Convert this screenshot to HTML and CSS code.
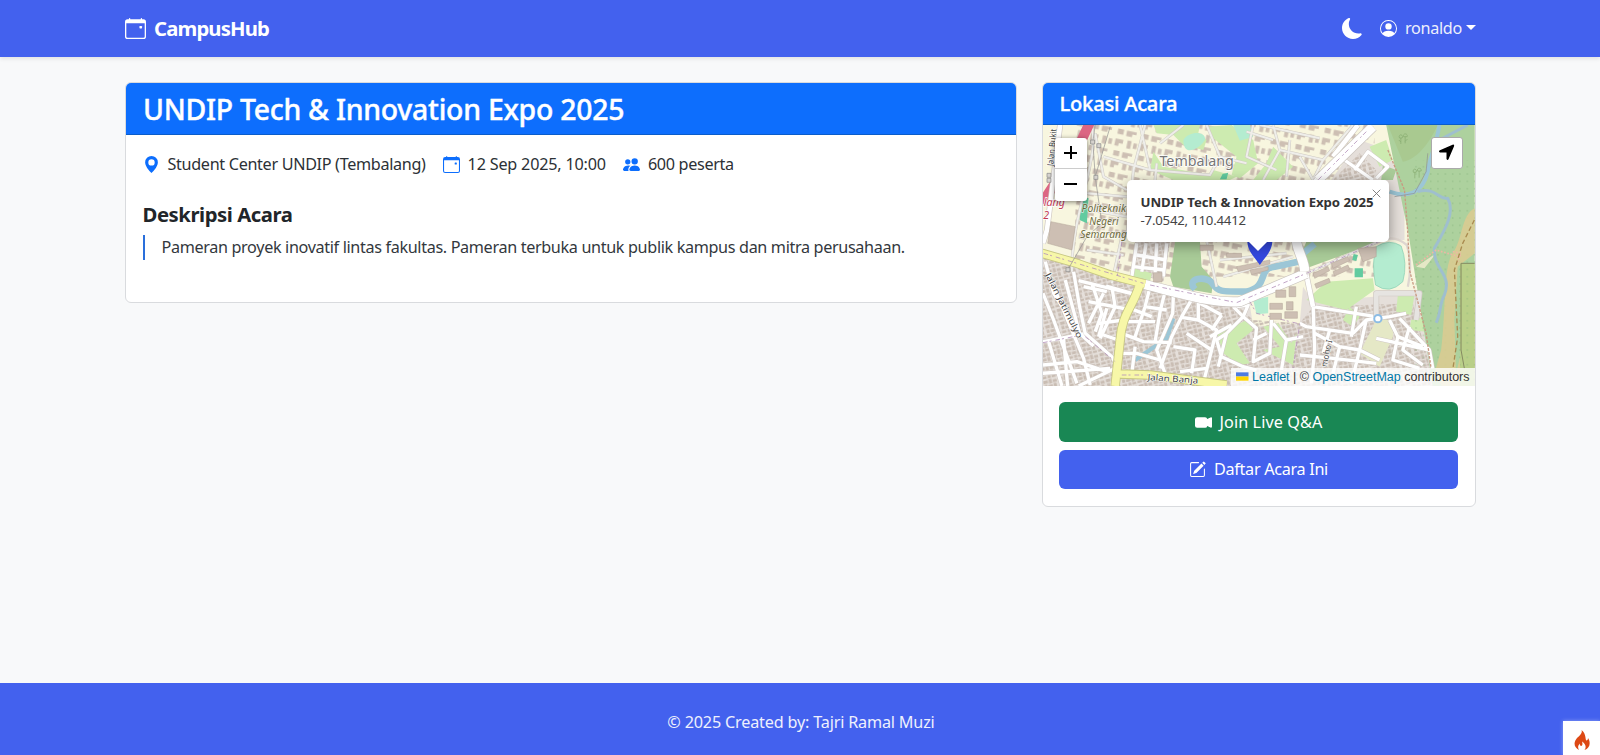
FILE: index.html
```html
<!DOCTYPE html>
<html lang="id">
<head>
<meta charset="utf-8">
<title>CampusHub</title>
<link rel="stylesheet" href="styles.css">
</head>
<body>
<nav class="navbar">
  <div class="container navbar-inner">
    <div class="brand">
      <svg class="icon brand-icon" viewBox="0 0 16 16"><path d="M11 6.5a.5.5 0 0 1 .5-.5h1a.5.5 0 0 1 .5.5v1a.5.5 0 0 1-.5.5h-1a.5.5 0 0 1-.5-.5z"/><path d="M3.5 0a.5.5 0 0 1 .5.5V1h8V.5a.5.5 0 0 1 1 0V1h1a2 2 0 0 1 2 2v11a2 2 0 0 1-2 2H2a2 2 0 0 1-2-2V3a2 2 0 0 1 2-2h1V.5a.5.5 0 0 1 .5-.5M1 4v10a1 1 0 0 0 1 1h12a1 1 0 0 0 1-1V4z"/></svg>
      <span class="brand-name">CampusHub</span>
    </div>
    <div class="nav-tools">
      <svg class="icon moon-icon" viewBox="0 0 16 16"><path d="M6 .278a.77.77 0 0 1 .08.858 7.2 7.2 0 0 0-.878 3.46c0 4.021 3.278 7.277 7.318 7.277q.792-.001 1.533-.16a.79.79 0 0 1 .81.316.73.73 0 0 1-.031.893A8.35 8.35 0 0 1 8.344 16C3.734 16 0 12.286 0 7.71 0 4.266 2.114 1.312 5.124.06A.75.75 0 0 1 6 .278"/></svg>
      <svg class="icon user-icon" viewBox="0 0 16 16"><path d="M11 6a3 3 0 1 1-6 0 3 3 0 0 1 6 0"/><path fill-rule="evenodd" d="M0 8a8 8 0 1 1 16 0A8 8 0 0 1 0 8m8-7a7 7 0 0 0-5.468 11.37C3.242 11.226 4.805 10 8 10s4.757 1.225 5.468 2.37A7 7 0 0 0 8 1"/></svg>
      <span class="user-name">ronaldo</span>
      <span class="caret"></span>
    </div>
  </div>
</nav>

<main class="container content">
  <section class="card">
    <h1 class="card-header event-title"><span>UNDIP Tech &amp; Innovation Expo 2025</span></h1>
    <div class="event-body">
      <div class="meta">
        <svg class="icon meta-icon" viewBox="0 0 16 16"><path d="M8 16s6-5.686 6-10A6 6 0 0 0 2 6c0 4.314 6 10 6 10m0-7a3 3 0 1 1 0-6 3 3 0 0 1 0 6"/></svg>
        <span class="meta-text place">Student Center UNDIP (Tembalang)</span>
        <svg class="icon meta-icon" viewBox="0 0 16 16"><path d="M11 6.5a.5.5 0 0 1 .5-.5h1a.5.5 0 0 1 .5.5v1a.5.5 0 0 1-.5.5h-1a.5.5 0 0 1-.5-.5z"/><path d="M3.5 0a.5.5 0 0 1 .5.5V1h8V.5a.5.5 0 0 1 1 0V1h1a2 2 0 0 1 2 2v11a2 2 0 0 1-2 2H2a2 2 0 0 1-2-2V3a2 2 0 0 1 2-2h1V.5a.5.5 0 0 1 .5-.5M1 4v10a1 1 0 0 0 1 1h12a1 1 0 0 0 1-1V4z"/></svg>
        <span class="meta-text date">12 Sep 2025, 10:00</span>
        <svg class="icon meta-icon" viewBox="0 0 16 16"><path d="M7 14s-1 0-1-1 1-4 5-4 5 3 5 4-1 1-1 1zm4-6a3 3 0 1 0 0-6 3 3 0 0 0 0 6m-5.784 6A2.24 2.24 0 0 1 5 13c0-1.355.68-2.75 1.936-3.72A6.3 6.3 0 0 0 5 9c-4 0-5 3-5 4s1 1 1 1zM4.5 8a2.5 2.5 0 1 0 0-5 2.5 2.5 0 0 0 0 5"/></svg>
        <span class="meta-text">600 peserta</span>
      </div>
      <h2 class="section-title">Deskripsi Acara</h2>
      <p class="description">Pameran proyek inovatif lintas fakultas. Pameran terbuka untuk publik kampus dan mitra perusahaan.</p>
    </div>
  </section>

  <aside class="card">
    <h2 class="card-header location-title">Lokasi Acara</h2>
    <div class="map">
      <svg class="map-canvas" viewBox="8 15 1299 783" preserveAspectRatio="none">
        <defs>
          <pattern id="houses" width="46" height="40" patternUnits="userSpaceOnUse" patternTransform="rotate(-14)">
            <path class="house" d="M2 3h14v9H2zM19 1h9v13h-9zM31 4h12v9H31zM3 16h9v10H3zM15 18h13v8H15zM31 16h9v12h-9zM1 30h14v7H1zM19 29h9v9h-9zM31 31h12v7H31z"/>
          </pattern>
          <pattern id="campus" width="76" height="66" patternUnits="userSpaceOnUse" patternTransform="rotate(12)">
            <path class="building" d="M5 7h24v12H17v9H5zM42 5h12v24H42zM61 10h11v16H61zM7 42h18v16H7zM34 43h30v8H52v8H34z"/>
          </pattern>
          <pattern id="trees" width="22" height="22" patternUnits="userSpaceOnUse">
            <circle class="tree" cx="8" cy="8" r="1.6"/>
          </pattern>
          <g id="lanes">
            <path d="M100 455L118 560L135 640L215 710L235 745"/>
            <path d="M15 425L40 520L118 640L160 678"/>
            <path d="M8 520L40 600L110 790M40 500L130 715L150 795M75 480L118 640M8 735L110 725L200 755M8 665L130 642M25 665L65 798M70 658L82 798M5 760L210 745M115 798L225 745"/>
            <path d="M115 482L290 525M155 490L185 580L165 635M198 498L275 520M200 565L175 650M180 655L225 560L215 500M145 545L275 570M175 610L250 600M190 645L235 660M130 500L200 515M145 610L190 520"/>
            <path d="M270 565L335 590M255 605L345 605M245 640L310 665L395 668M240 700L290 700L360 720M285 650L315 560L380 570M330 500L315 560M375 515L360 575L345 665M400 525L398 580L350 690L375 760"/>
            <path d="M460 530L425 590L395 650L360 745M425 592L475 600L530 630L515 690L490 790M475 600L475 545M440 640L515 690M400 680L465 690L455 760M285 680L275 760M420 755L500 745"/>
            <path d="M580 560L610 590L560 640L535 740M610 590L650 625L640 725L690 700L695 600M560 640L530 660L545 710L610 740L650 750M510 650L575 615M610 590L625 555L590 560M480 550L545 585M545 585L515 630"/>
            <path d="M700 610L740 660L725 750M740 660L790 650M640 660L680 640M780 610L800 620L940 640L980 600L1050 590L1100 580M820 550L825 690L815 790M820 560L1010 590"/>
            <path d="M825 640L900 680L880 760M870 630L850 700M900 680L960 690L935 790M950 560L935 650M980 600L960 690L1020 720M780 705L880 715L1010 730M1010 655L1170 690M1050 600L1075 650L1150 680M1075 650L1060 720L1140 745M1110 620L1090 690L1150 735M1080 595L1170 690L1180 745"/>
            <path d="M290 370L275 470M318 370L305 455M350 370L345 460M380 370L370 470M290 405L380 420M280 440L375 450"/>
          </g>
          <g id="campus-lanes">
            <path d="M150 15C190 80 90 290 95 455M165 40L190 170L260 210M190 110L330 150L300 15M315 15L280 150L260 350M330 150L510 165L540 110L620 130M500 15L540 110M640 15L620 110L710 150M700 15L720 90L850 120L940 15M850 120L820 180M720 90L670 180M820 180L780 110M360 70L430 15M140 220L260 230M150 270L260 290M140 390L250 405M245 350L215 490M500 360L530 500M540 420L740 400M550 470L760 410M350 130L345 180M620 35L700 60M660 15L840 55M750 60L740 170"/>
          </g>
        </defs>
        <rect class="land" x="0" y="0" width="1320" height="810"/>
        <rect fill="url(#campus)" x="105" y="0" width="900" height="470"/>
        <path class="residential" d="M860 200L960 60L1045 90L1095 210V360H860z"/>
        <path fill="url(#houses)" d="M880 180L960 100L1010 150L1000 180z"/>
        <path class="residential" d="M0 390L300 480L590 545L630 555L640 620L780 610L790 500L820 545L1130 520L1190 810H0z"/>
        <path fill="url(#houses)" d="M0 400L300 490L590 555L640 600L780 610L820 560L1120 550L1190 810H0z"/>
        <path class="residential" d="M285 365H390L370 485L275 455z"/>
        <path fill="url(#houses)" d="M285 365H390L370 485L275 455z"/>

        <!-- parks, pitches and woodland -->
        <path class="grass" d="M340 15H480L475 40L500 60L490 90L430 75L400 45L350 40zM500 20L575 15L640 60L655 130L600 175L575 165L590 110L520 55zM340 95L370 140L510 165L530 180H400L330 150zM520 150L590 170L570 180H500zM700 80L760 140L710 180H640L680 130zM280 445L335 460L330 485L280 478zM800 540L860 485L1000 475L1005 510L920 570zM1075 525H1125L1115 585L1070 575zM530 635L580 620L620 600L640 630L590 670L630 730L600 735L550 700zM670 620L715 610L755 670L770 640L760 735L670 690L720 680zM930 560L960 590L940 620L910 600zM1115 600L1155 590L1160 635L1110 630zM990 80L1040 60L1060 120L1020 140z"/>
        <path class="wood-dark" d="M405 365H480L485 440L520 480L515 520L400 500L390 470zM800 365H1020L800 445L785 400zM1030 135L1070 150L1060 180H1025z"/>
        <path class="pitch" d="M430 60C450 30 500 35 495 60C480 85 430 115 430 60zM580 15H630L640 50L600 62zM640 540L685 530V580L650 583z"/>
        <path class="sport" d="M120 225L145 235L140 310L118 300zM548 162L565 158L560 178H540zM945 445H970V472H945zM942 402L955 405L950 423L938 420z"/>
        <path class="wood" d="M1040 15H1306V798L1180 798L1105 330L1090 260z"/>
        <path class="wood-edge" d="M1045 15H1195C1170 70 1130 120 1090 125z"/>
        <rect fill="url(#trees)" x="1120" y="120" width="190" height="680"/>
        <path class="sand" d="M1306 265C1265 285 1270 360 1240 400S1220 580 1205 690L1185 760L1215 810H1306V440L1265 430V700L1250 760L1245 600L1255 440L1306 400z"/>
        <path class="orchard" d="M1262 430H1306V798H1262z"/>
        <path fill="url(#trees)" d="M1262 430H1306V798H1262z"/>
        <path class="tree-symbol" d="M1084 72V54M1084 66L1078 60M1097 70V50M1097 64L1104 57M1080 54a5 6 0 1 1 8 0zM1092 50a6 6 0 1 1 11 0zM1126 175V157M1139 173V153M1122 157a5 6 0 1 1 8 0zM1134 153a6 6 0 1 1 11 0z"/>
        <path class="pale" d="M1010 600C1060 590 1065 610 1060 650L1020 740L960 700zM1130 440L1190 400L1155 445z"/>
        <path class="pitch outlined" d="M1010 380Q1050 355 1085 378Q1105 430 1090 485Q1050 525 1008 495Q995 430 1010 380z"/>
        <path class="track" d="M1000 372Q1055 335 1102 375Q1120 435 1105 500"/>

        <!-- rivers -->
        <path class="river" d="M1200 15C1190 80 1165 130 1165 155C1150 220 1105 235 1050 215"/>
        <path class="river thin" d="M1135 215C1190 200 1195 240 1225 235C1250 280 1210 340 1185 385C1180 450 1240 460 1215 525C1200 550 1205 580 1190 608"/>
        <path class="river thin" d="M1200 60L1285 15"/>
        <path class="river wide" d="M465 508C435 475 500 465 517 490S540 515 620 515C690 500 650 445 705 440L775 425M790 400L825 372"/>
        <path class="river" d="M400 595L380 655L285 720"/>

        <!-- street network -->
        <use href="#campus-lanes" class="casing-thin"/>
        <use href="#campus-lanes" class="lane-thin"/>
        <use href="#lanes" class="casing"/>
        <use href="#lanes" class="lane"/>
        <path class="red-road" d="M150 5L115 80L70 150L5 250"/>
        <path class="casing main" d="M60 10L20 330L8 370M1000 20L825 185M955 15L880 110M770 360C775 400 800 440 800 465L820 560M1010 590V520H1140L1130 600"/>
        <path class="lane main" d="M60 10L20 330L8 370M1000 20L825 185M955 15L880 110M770 360C775 400 800 440 800 465L820 560"/>
        <path class="grey-lane" d="M1010 590V520H1140L1130 600"/>
        <path class="casing" d="M900 110L1000 180M945 150L985 95L1045 140L1010 175"/>
        <path class="lane" d="M900 110L1000 180M945 150L985 95L1045 140L1010 175"/>
        <path class="avenue-casing" d="M1000 20L835 180"/>
        <path class="avenue" d="M1000 20L835 180"/>
        <path class="avenue-casing" d="M300 490C440 525 520 550 600 545L800 460"/>
        <path class="avenue" d="M300 490C440 525 520 550 600 545L800 460"/>
        <path class="avenue-casing" d="M770 360C772 395 795 420 795 455"/>
        <path class="avenue" d="M770 360C772 395 795 420 795 455"/>
        <path class="casing-thin" d="M800 460L1050 350"/>
        <path class="lane-thin" d="M800 460L1050 350"/>
        <path class="yellow-casing" d="M5 400L110 430L210 465L315 492M300 490C280 560 245 580 240 660L225 798M240 762L330 765L560 795"/>
        <path class="yellow-road" d="M5 400L110 430L210 465L315 492M300 490C280 560 245 580 240 660L225 798M240 762L330 765L560 795"/>
        <path class="road-dash" d="M10 400L310 490M330 495L590 548L800 460L1040 355M980 35L835 180M630 545L650 580L780 612L760 745M135 650L225 725M245 365L230 480M8 668L110 648M245 765L340 765"/>
        <path class="boundary" d="M1045 90L1095 210L1105 340L1110 450L1160 640L1175 745"/>
        <path class="trail" d="M1130 435L1190 390L1260 410M1240 395L1265 400L1255 425"/>
        <path class="footpath" d="M1305 300L1270 370L1245 450L1255 650L1240 750"/>
        <path class="fence" d="M1265 430V690L1275 745M1265 430H1306"/>
        <path class="railway" d="M210 20L165 170L185 310L140 350L85 445M165 15L158 65L165 170M1165 100L1160 155L1125 220L1065 230"/>
        <path class="node" d="M151 60h12v12h-12zM170 71h12v12h-12zM161 166h12v12h-12zM77 443h12v12h-12zM20 160h12v12H20zM20 175h12v12H20z"/>

        <!-- large buildings -->
        <path class="building edged" d="M32 305L105 320L95 390L22 370zM955 385L1010 380V410L970 425zM875 430L925 410L930 422L880 445zM880 455L925 435L930 448L885 468zM820 460L865 440L870 452L825 475zM825 492L868 475L872 487L830 505zM340 458h26v28h-26zM708 510h30v22h-30zM748 500h20v30h-20zM690 550h38v18h-38zM740 545h20v25h-20zM690 580h35v18h-35zM735 575h38v20h-38zM560 400h45v12h-45zM590 440L690 420V432L595 455zM480 375h40v16h-40zM630 450L685 440V450L635 464z"/>
        <circle class="roundabout" cx="1015" cy="596" r="11"/>

        <!-- place labels -->
        <text class="town" x="358" y="138" textLength="224" lengthAdjust="spacingAndGlyphs">Tembalang</text>
        <g class="school">
          <text x="124" y="277" textLength="134" lengthAdjust="spacingAndGlyphs">Politeknik</text>
          <text x="147" y="315" textLength="88" lengthAdjust="spacingAndGlyphs">Negeri</text>
          <text x="120" y="353" textLength="140" lengthAdjust="spacingAndGlyphs">Semarang</text>
        </g>
        <text class="toll" x="10" y="259" textLength="64" lengthAdjust="spacingAndGlyphs">lang</text>
        <text class="toll" x="9" y="297">2</text>
        <text class="street" transform="translate(39 139) rotate(-85)" textLength="112" lengthAdjust="spacingAndGlyphs">Jalan Bukit</text>
        <text class="street" transform="translate(14 464) rotate(63)" textLength="216" lengthAdjust="spacingAndGlyphs">Jalan Jatimulyo</text>
        <text class="street" transform="translate(322 780) rotate(4)" textLength="152" lengthAdjust="spacingAndGlyphs">Jalan Banja</text>
        <text class="street" transform="translate(861 742) rotate(-78)" textLength="82" lengthAdjust="spacingAndGlyphs">moho I</text>
        <path class="marker" d="M660 435C646 412 622 397 622 358H698C698 397 674 412 660 435z"/>
      </svg>
      <div class="zoom-control"><span class="zoom-button plus"></span><span class="zoom-button minus"></span></div>
      <div class="locate"><svg class="locate-icon" viewBox="0 0 18 18"><path d="M15.400.7Q17.700 0 17 2.500L11.200 16Q10.200 18 9 15.900V9H2.100Q0 7.900 2 6.700z"/></svg></div>
      <div class="popup">
        <strong class="popup-title">UNDIP Tech &amp; Innovation Expo 2025</strong>
        <span class="popup-coords">-7.0542, 110.4412</span>
        <svg class="popup-close" viewBox="0 0 10 10"><path d="M.8.800L9.200 9.200M9.200.800L.8 9.200"/></svg>
        <span class="popup-tip"></span>
      </div>
      <div class="attribution">
        <svg class="flag" viewBox="0 0 12 8"><path fill="#4c7be1" d="M0 0h12v4H0z"/><path fill="#ffd500" d="M0 4h12v4H0z"/></svg>
        <span class="link">Leaflet</span> | © <span class="link">OpenStreetMap</span> contributors
      </div>
    </div>
    <div class="actions">
      <div class="button join"><svg class="icon button-icon" viewBox="0 0 16 16"><path d="M0 5a2 2 0 0 1 2-2h7.500a2 2 0 0 1 1.983 1.738l3.110-1.382A1 1 0 0 1 16 4.269v7.462a1 1 0 0 1-1.406.913l-3.111-1.382A2 2 0 0 1 9.500 13H2a2 2 0 0 1-2-2z"/></svg><span>Join Live Q&amp;A</span></div>
      <div class="button register"><svg class="icon button-icon" viewBox="0 0 16 16"><path d="M15.502 1.940a.5.5 0 0 1 0 .706L14.459 3.690l-2-2L13.502.646a.5.5 0 0 1 .707 0l1.293 1.293zm-1.750 2.456-2-2L4.939 9.210a.5.5 0 0 0-.121.196l-.805 2.414a.25.25 0 0 0 .316.316l2.414-.805a.5.5 0 0 0 .196-.120z"/><path fill-rule="evenodd" d="M1 13.500A1.500 1.500 0 0 0 2.500 15h11a1.500 1.500 0 0 0 1.500-1.500v-6a.5.5 0 0 0-1 0v6a.5.5 0 0 1-.5.5h-11a.5.5 0 0 1-.5-.5v-11a.5.5 0 0 1 .5-.5H9a.5.5 0 0 0 0-1H2.500A1.500 1.500 0 0 0 1 2.500z"/></svg><span>Daftar Acara Ini</span></div>
    </div>
  </aside>
</main>

<footer class="footer"><span>© 2025 Created by: Tajri Ramal Muzi</span></footer>
<div class="debug-badge"><svg class="flame" viewBox="0 0 16 20"><path d="M7.500 0C9 4 4.500 6 2 9.500C-1 14 1 18 5 20C3.500 17.500 4 15.500 6 13.500C5.500 15.500 7 16.500 8 15.500C9 14 8 13 8.300 11.500C11 13.500 13 17 10.500 20C16 18 17 12.500 14 8C14 9.500 13.500 10.500 12.300 10.500C11 9 12.500 4 7.500 0z"/></svg></div>
</body>
</html>
```

FILE: styles.css
```css
* { box-sizing: border-box; }
body {
  margin: 0;
  min-height: 755px;
  display: flex;
  flex-direction: column;
  background: #f8f9fa;
  color: #212529;
  font: 16.2px/25px "Noto Sans", "Open Sans", sans-serif;
  overflow: hidden;
}
h1, h2, p { margin: 0; }
.container { width: 1350px; margin: 0 auto; }
.icon { fill: currentColor; flex: none; display: block; }

.navbar { height: 56.500px; flex: none; background: #4361ee; color: #fff; box-shadow: 0 2px 4px rgba(0, 0, 0, .09); }
.navbar-inner { height: 56px; display: flex; align-items: center; justify-content: space-between; }
.brand { display: flex; align-items: center; gap: 8px; }
.brand-icon { width: 21px; height: 21px; }
.brand-name { font-size: 20.300px; font-weight: 700; letter-spacing: -.85px; }
.nav-tools { display: flex; align-items: center; margin-right: -1px; }
.moon-icon { width: 21px; height: 21px; margin-right: 17px; }
.user-icon { width: 17px; height: 17px; margin-right: 8px; }
.user-name { letter-spacing: -.3px; opacity: .9; }
.caret { margin-left: 4px; margin-bottom: 2px; border: 5px solid transparent; border-top-color: #fff; border-bottom: 0; }

.content { flex: 1; padding-top: 25px; display: grid; grid-template-columns: 891.500px 434px; gap: 25px; align-items: start; }
.card { background: #fff; border: 1px solid #d9dbde; border-radius: 6px; overflow: hidden; }
.card-header { background: #0d6efd; color: #fff; border-bottom: 1px solid #0b5dca; padding: 0 17px; font-weight: 500; }
.event-title { height: 52px; font-size: 28.400px; line-height: 53px; letter-spacing: -.25px; -webkit-text-stroke: .4px #fff; }
.event-body { height: 167px; padding: 17.500px 17px 0 16.500px; }
.meta { display: flex; align-items: center; }
.meta-icon { width: 17px; height: 17px; margin-right: 8px; color: #0d6efd; }
.meta-text { margin-right: 17px; letter-spacing: -.33px; white-space: nowrap; color: #2c3136; }
.meta-text.date { letter-spacing: -.2px; }
.section-title { margin-top: 24.500px; font-size: 20.300px; font-weight: 700; line-height: 25px; letter-spacing: -.45px; }
.description { margin-top: 8px; padding-left: 17px; border-left: 2px solid #2a6fdb; color: #33383d; letter-spacing: -.35px; line-height: 25.500px; white-space: nowrap; }

.location-title { height: 42.500px; font-size: 20.200px; line-height: 41px; letter-spacing: -.25px; -webkit-text-stroke: .35px #fff; }
.map { position: relative; height: 261px; overflow: hidden; }
.map-canvas { display: block; width: 100%; height: 261px; }
.actions { display: grid; gap: 8px; padding: 16px 16.500px 17px; }
.button { height: 39.500px; padding-top: 1px; border-radius: 6px; color: #fff; display: flex; align-items: center; justify-content: center; gap: 8px; letter-spacing: -.3px; }
.button-icon { width: 17px; height: 17px; }
.join { background: #198754; letter-spacing: .1px; }
.register { background: #4361ee; }

.zoom-control { position: absolute; left: 12px; top: 12.500px; width: 32px; height: 63px; background: #fff; border-radius: 3px; box-shadow: 0 1px 5px rgba(0, 0, 0, .5); }
.zoom-button { display: flex; height: 31px; align-items: center; justify-content: center; position: relative; }
.plus { border-bottom: 1px solid #ccc; }
.zoom-button::before { content: ""; width: 13px; height: 2px; background: #000; }
.plus::after { content: ""; position: absolute; width: 2px; height: 13px; background: #000; }
.locate { position: absolute; right: 12px; top: 11.500px; width: 32px; height: 32px; background: #fff; border: 1px solid #aaa; border-radius: 3px; display: grid; place-items: center; }
.locate-icon { width: 17px; height: 17px; }
.popup { position: absolute; left: 84px; top: 54.500px; width: 262px; height: 62px; padding: 13px 14px; background: #fff; border-radius: 5px; box-shadow: 0 3px 14px rgba(0, 0, 0, .4); color: #333; font-size: 13.200px; line-height: 18px; display: flex; flex-direction: column; }
.popup-title { letter-spacing: -.05px; white-space: nowrap; }
.popup-coords { color: #444; letter-spacing: -.2px; }
.popup-close { position: absolute; right: 8px; top: 9px; width: 9px; height: 9px; fill: none; stroke: #757575; }
.popup-tip { position: absolute; left: 121px; top: 61px; border: 10px solid transparent; border-top-color: #fff; border-bottom: 0; }
.attribution { position: absolute; right: 0; bottom: 0; height: 18px; padding: 0 5px; background: rgba(255, 255, 255, .8); color: #333; font: 12.500px/19px "Liberation Sans", Arial, sans-serif; white-space: nowrap; }
.link { color: #0078a8; }
.flag { width: 12.500px; height: 9px; }

.footer { height: 72.500px; flex: none; background: #4361ee; color: #eef0fd; display: flex; align-items: center; justify-content: center; padding-top: 7px; padding-left: 2px; letter-spacing: -.18px; }
.debug-badge { position: absolute; right: 0; bottom: 0; width: 37px; height: 34px; background: #fff; box-shadow: 0 0 4px rgba(255, 255, 255, .4); display: grid; place-items: center; }
.flame { width: 16px; height: 20px; fill: #dd4814; margin-top: 4px; }

/* map cartography */
.land { fill: #f8f6df; }
.residential { fill: #e5dfda; }
.building { fill: #cdbfb3; }
.house { fill: #c9bdb3; }
.edged { stroke: #b3a497; stroke-width: 1.500; }
.grass { fill: #cdebb0; }
.wood { fill: #add19e; }
.wood-edge { fill: #a9c990; }
.wood-dark { fill: #a9cb98; }
.orchard { fill: #b9cf88; }
.sand { fill: #dccb91; opacity: .85; }
.pale { fill: #e5e8c6; }
.pitch { fill: #b4ecd0; }
.outlined { stroke: #88cdb0; stroke-width: 2; }
.sport { fill: #62cba0; }
.tree { fill: #7fae76; }
.tree-symbol { fill: none; stroke: #86aa70; stroke-width: 2; }
.track, .river, .casing, .lane, .casing-thin, .lane-thin, .grey-lane, .red-road, .avenue, .avenue-casing, .yellow-road, .yellow-casing, .road-dash, .boundary, .trail, .footpath, .fence, .railway { fill: none; stroke-linejoin: round; }
.track { stroke: #ded6d0; stroke-width: 7; }
.river { stroke: #9cc6d6; stroke-width: 12; }
.river.thin { stroke: #9fbfce; stroke-width: 9; }
.river.wide { stroke-width: 20; }
.casing { stroke: #cfc8c3; stroke-width: 13; }
.lane { stroke: #fff; stroke-width: 10; }
.casing-thin { stroke: #cfcbc3; stroke-width: 9; }
.lane-thin { stroke: #efeeea; stroke-width: 6; }
.casing.main { stroke-width: 18; }
.lane.main { stroke-width: 14; }
.grey-lane { stroke: #e6e4e1; stroke-width: 14; }
.red-road { stroke: #dc6683; stroke-width: 30; }
.avenue-casing { stroke: #c9c3bd; stroke-width: 32; }
.avenue { stroke: #fff; stroke-width: 28; }
.yellow-casing { stroke: #c7c783; stroke-width: 28; }
.yellow-road { stroke: #f7f7a8; stroke-width: 23; }
.road-dash { stroke: #b493ba; stroke-width: 2.500; stroke-dasharray: 14 6 6 12; }
.boundary { stroke: #c99a82; stroke-width: 4; stroke-dasharray: 8 4; }
.trail { stroke: #edb7a4; stroke-width: 5; stroke-dasharray: 5 5; }
.footpath { stroke: #a98b50; stroke-width: 4; stroke-dasharray: 14 8; }
.fence { stroke: #858b61; stroke-width: 3; }
.railway { stroke: #909090; stroke-width: 2; }
.node { fill: #d5d2ce; stroke: #888; stroke-width: 2; }
.roundabout { fill: #fff; stroke: #8bbce5; stroke-width: 6; }
.marker { fill: #3448df; }
.town { font-size: 44px; fill: #777; stroke: #fff; stroke-width: 5; paint-order: stroke; }
.school { font-size: 30px; font-style: italic; fill: #6d6b3b; stroke: #fff; stroke-width: 4; stroke-opacity: .7; paint-order: stroke; }
.toll { font-size: 32px; font-style: italic; fill: #c23b55; stroke: #fff; stroke-width: 4; paint-order: stroke; }
.street { font-size: 26px; fill: #444; stroke: #fff; stroke-width: 3; paint-order: stroke; }
```
